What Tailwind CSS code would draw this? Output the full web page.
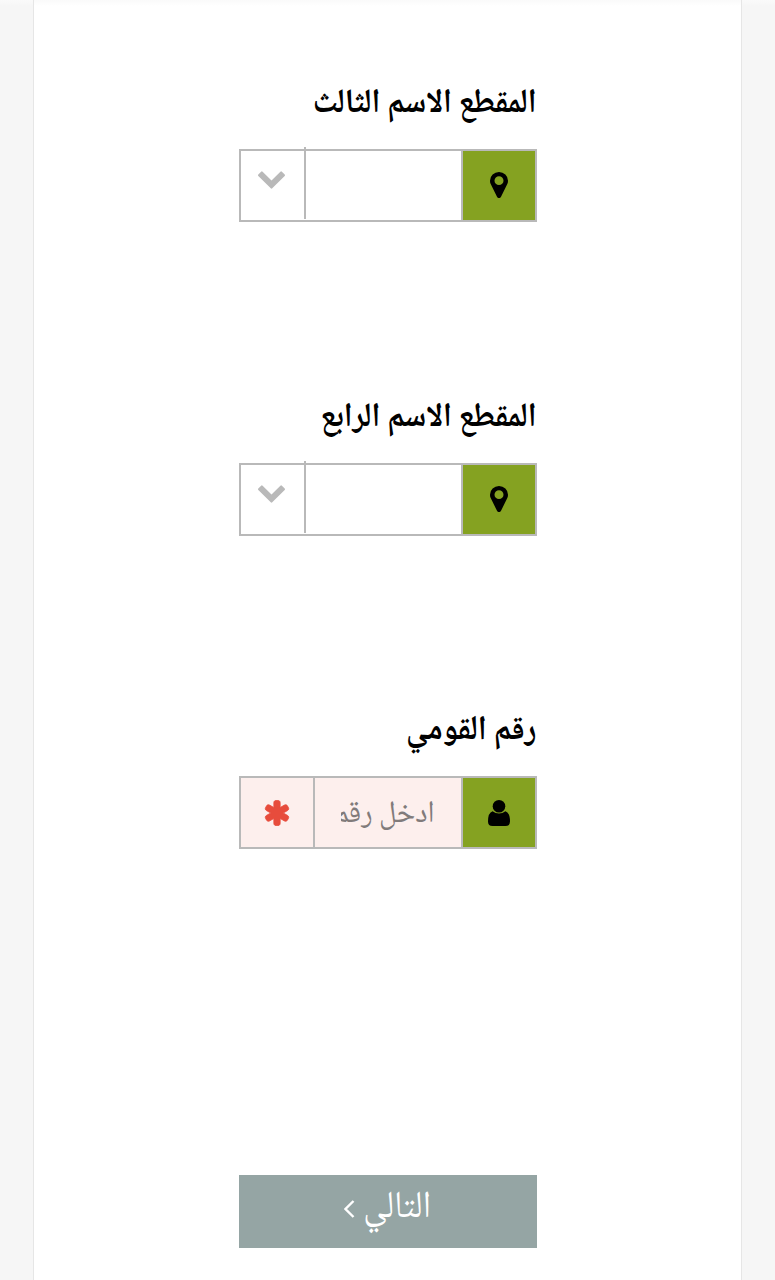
<!DOCTYPE html>
<html lang="ar" dir="rtl">
<head>
    <meta charset="UTF-8">
    <meta name="viewport" content="width=device-width, initial-scale=1.0">
    <title>رقم القومي</title>
    <script src="https://cdn.jsdelivr.net/npm/@tailwindcss/browser@4"></script>
</head>
<body class="bg-[#f6f6f6] font-['Noto_Naskh_Arabic_UI','Noto_Naskh_Arabic','Noto_Sans_Arabic','Noto_Sans','DejaVu_Sans',sans-serif] text-black">
    <div class="h-[1280px] overflow-hidden bg-linear-to-b from-[#fafafa] to-transparent to-[6px]">
    <main class="mx-auto h-full w-[709px] border-x border-[#e6e6e6] bg-white bg-linear-to-b from-[#fafafa] to-white to-[6px] pt-[76px]">
        <form class="mx-auto w-[298px]">
            <div class="h-[314px]">
                <div class="h-[73px]">
                    <label class="block scale-y-110 whitespace-nowrap text-[31px] leading-[56px] font-bold">المقطع الاسم الثالث</label>
                </div>
                <div class="flex h-[73px] border-2 border-[#b9b9b9]">
                    <span class="flex w-[74px] shrink-0 items-center justify-center border-l-2 border-[#b9b9b9] bg-[#85a221] pb-px">
                        <svg class="h-[26px] w-[18px]" viewBox="0 128 1024 1536" preserveAspectRatio="none"><path d="M768 640q0-106-75-181t-181-75-181 75-75 181 75 181 181 75 181-75 75-181zm256 0q0 109-33 179l-364 774q-16 33-47.5 52t-67.5 19-67.5-19-46.5-52l-365-774q-33-70-33-179 0-212 150-362t362-150 362 150 150 362z"/></svg>
                    </span>
                    <span class="flex-1"></span>
                    <span class="-mt-1 flex h-[72px] w-[65px] justify-center border-r-2 border-[#b9b9b9] pt-6 pr-0.5">
                        <svg class="h-[18px] w-[27px] fill-[#b9b9b9]" viewBox="90 533 1612 1035"><path d="M1683 808l-742 741q-19 19-45 19t-45-19l-742-741q-19-19-19-45.5t19-45.5l166-165q19-19 45-19t45 19l531 531 531-531q19-19 45-19t45 19l166 165q19 19 19 45.5t-19 45.5z"/></svg>
                    </span>
                </div>
            </div>
            <div class="h-[313px]">
                <div class="h-[73px]">
                    <label class="block scale-y-110 whitespace-nowrap text-[31px] leading-[56px] font-bold">المقطع الاسم الرابع</label>
                </div>
                <div class="flex h-[73px] border-2 border-[#b9b9b9]">
                    <span class="flex w-[74px] shrink-0 items-center justify-center border-l-2 border-[#b9b9b9] bg-[#85a221] pb-px">
                        <svg class="h-[26px] w-[18px]" viewBox="0 128 1024 1536" preserveAspectRatio="none"><path d="M768 640q0-106-75-181t-181-75-181 75-75 181 75 181 181 75 181-75 75-181zm256 0q0 109-33 179l-364 774q-16 33-47.5 52t-67.5 19-67.5-19-46.5-52l-365-774q-33-70-33-179 0-212 150-362t362-150 362 150 150 362z"/></svg>
                    </span>
                    <span class="flex-1"></span>
                    <span class="-mt-1 flex h-[72px] w-[65px] justify-center border-r-2 border-[#b9b9b9] pt-6 pr-0.5">
                        <svg class="h-[18px] w-[27px] fill-[#b9b9b9]" viewBox="90 533 1612 1035"><path d="M1683 808l-742 741q-19 19-45 19t-45-19l-742-741q-19-19-19-45.5t19-45.5l166-165q19-19 45-19t45 19l531 531 531-531q19-19 45-19t45 19l166 165q19 19 19 45.5t-19 45.5z"/></svg>
                    </span>
                </div>
            </div>
            <div class="h-[472px]">
                <div class="h-[73px]">
                    <label class="block scale-y-110 whitespace-nowrap text-[31.5px] leading-[56px] font-bold">رقم القومي</label>
                </div>
                <div class="flex h-[73px] border-2 border-[#b9b9b9] bg-[#fdefed]">
                    <span class="flex w-[74px] shrink-0 items-center justify-center border-l-2 border-[#b9b9b9] bg-[#85a221]">
                        <svg class="h-[26px] w-[22px]" viewBox="0 0 22 26"><circle cx="11" cy="6.3" r="6.3"/><path d="M4.6 11.2Q0 12.6 0 21.5 0 26 4.5 26h13q4.500 0 4.500-4.500 0-8.900-4.600-10.300Q14.500 13.600 11 13.600T4.600 11.200z"/></svg>
                    </span>
                    <!-- the field is narrower than its placeholder, the rest is clipped -->
                    <span class="min-w-0 flex-1 px-[26px]">
                        <span class="block h-full overflow-hidden whitespace-nowrap text-[29.5px] leading-[72px] text-[#817b7b]"><span class="inline-block scale-y-105">ادخل رقم القومي</span></span>
                    </span>
                    <span class="flex w-[74px] shrink-0 items-center justify-center border-r-2 border-[#b9b9b9]">
                        <svg class="h-[26px] w-[26px] fill-[#e74c3c] stroke-[#e74c3c] stroke-[50]" viewBox="128 103 1536 1586"><path d="M1546 1050q46 26 59.5 77.5t-12.5 97.5l-64 110q-26 46-77.5 59.5t-97.5-12.5l-266-153v307q0 52-38 90t-90 38h-128q-52 0-90-38t-38-90v-307l-266 153q-46 26-97.5 12.5t-77.5-59.5l-64-110q-26-46-12.5-97.5t59.5-77.5l266-154-266-154q-46-26-59.5-77.5t12.5-97.5l64-110q26-46 77.5-59.5t97.5 12.5l266 153v-307q0-52 38-90t90-38h128q52 0 90 38t38 90v307l266-153q46-26 97.5-12.5t77.5 59.5l64 110q26 46 12.5 97.5t-59.5 77.5l-266 154z"/></svg>
                    </span>
                </div>
            </div>
            <button type="button" class="flex h-[73px] w-full items-start justify-center gap-2 bg-[#95a5a4] text-[34.5px] text-white">
                <span class="scale-y-110 leading-[66px]">التالي</span>
                <svg class="mt-[25px] h-[18px] w-[11px] fill-none stroke-white stroke-[2.4]" viewBox="0 0 11 18"><path d="M9.500 1 1.500 9l8 8"/></svg>
            </button>
        </form>
    </main>
    </div>
</body>
</html>
